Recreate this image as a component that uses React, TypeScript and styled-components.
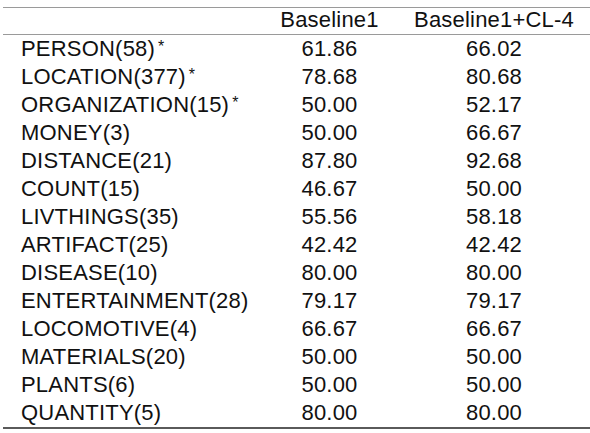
import React from "react";
import styled, { createGlobalStyle } from "styled-components";

const Global = createGlobalStyle`
  html, body {
    margin: 0;
    padding: 0;
    background: #ffffff;
    overflow: hidden;
  }
  body {
    font-family: "Liberation Sans", Arial, Helvetica, sans-serif;
    color: #111111;
  }
`;

const Page = styled.div`
  width: 590px;
  height: 433px;
  padding-top: 7px;
  box-sizing: border-box;
  overflow: hidden;
`;

const Table = styled.div`
  margin-left: 3px;
  width: 593px;
  display: flex;
  flex-direction: column;
  border-top: 1px solid #9a9a9a;
`;

const Row = styled.div<{ $head?: boolean }>`
  display: grid;
  grid-template-columns: 264px 125px 204px;
  height: ${(p) => (p.$head ? "26px" : "28px")};
  font-size: 22px;
  letter-spacing: 0.2px;
  line-height: ${(p) => (p.$head ? "24px" : "27px")};
  white-space: nowrap;
  overflow: hidden;
`;

const Head = styled.div`
  border-bottom: 1px solid #9a9a9a;
`;

const Body = styled.div`
  border-bottom: 2px solid #5a5a5a;
`;

const Label = styled.div`
  padding-left: 18px;
`;

const Num = styled.div`
  text-align: center;
`;

const Star = styled.span`
  font-size: 16px;
  line-height: 0;
  margin-left: 3px;
  vertical-align: 4px;
`;

const rows: [string, string, string, boolean][] = [
  ["PERSON(58)", "61.86", "66.02", true],
  ["LOCATION(377)", "78.68", "80.68", true],
  ["ORGANIZATION(15)", "50.00", "52.17", true],
  ["MONEY(3)", "50.00", "66.67", false],
  ["DISTANCE(21)", "87.80", "92.68", false],
  ["COUNT(15)", "46.67", "50.00", false],
  ["LIVTHINGS(35)", "55.56", "58.18", false],
  ["ARTIFACT(25)", "42.42", "42.42", false],
  ["DISEASE(10)", "80.00", "80.00", false],
  ["ENTERTAINMENT(28)", "79.17", "79.17", false],
  ["LOCOMOTIVE(4)", "66.67", "66.67", false],
  ["MATERIALS(20)", "50.00", "50.00", false],
  ["PLANTS(6)", "50.00", "50.00", false],
  ["QUANTITY(5)", "80.00", "80.00", false],
];

export default function App() {
  return (
    <Page>
      <Global />
      <Table>
        <Head>
          <Row $head>
            <Label />
            <Num>Baseline1</Num>
            <Num>Baseline1+CL-4</Num>
          </Row>
        </Head>
        <Body>
          {rows.map(([label, a, b, star]) => (
            <Row key={label}>
              <Label>
                {label}
                {star && <Star>*</Star>}
              </Label>
              <Num>{a}</Num>
              <Num>{b}</Num>
            </Row>
          ))}
        </Body>
      </Table>
    </Page>
  );
}
